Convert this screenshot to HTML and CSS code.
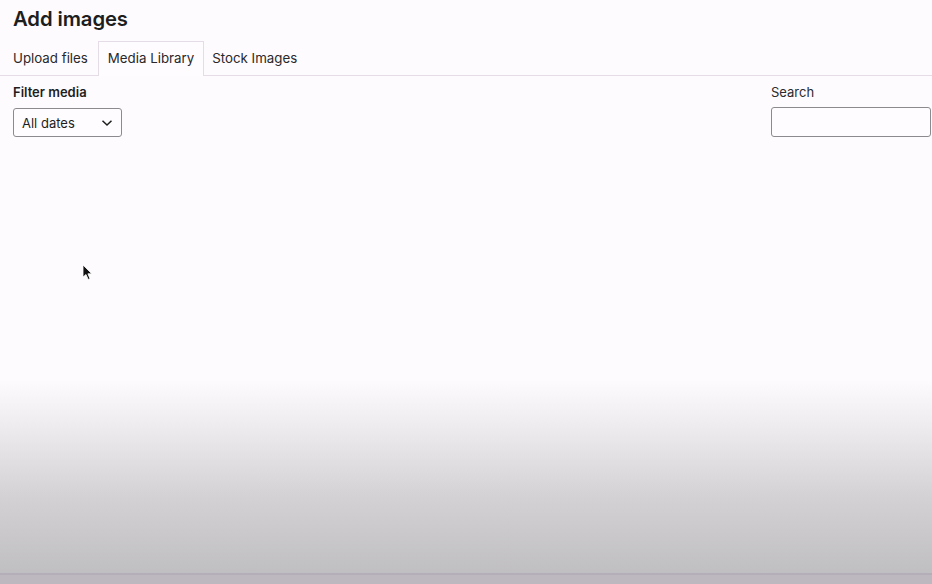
FILE: index.html
```html
<!DOCTYPE html>
<html>

<head>
    <meta charset="utf-8">
    <title>Add images</title>
    <link rel="stylesheet" href="styles.css">
</head>

<body>

    <div class="modal">

        <h1 class="title">Add images</h1>

        <div class="router">
            <span class="tab">Upload files</span>
            <span class="tab active">Media Library</span>
            <span class="tab">Stock Images</span>
        </div>

        <div class="toolbar">

            <div class="filter">
                <label class="filter-label">Filter media</label>
                <div class="select">
                    <span>All dates</span>
                    <svg width="12" height="8" viewBox="0 0 12 8">
                        <path d="M1.5 1.8 L6 6 L10.5 1.8" fill="none" stroke="#1e1e1e" stroke-width="1.5"/>
                    </svg>
                </div>
            </div>

            <div class="search">
                <label class="search-label">Search</label>
                <div class="search-input"></div>
            </div>

        </div>

        <div class="content"></div>

    </div>

    <!-- mouse pointer from the capture -->
    <svg class="cursor" width="12" height="18" viewBox="0 0 12 18">
        <path d="M1 1 L1 13 L4 10.5 L6.2 15.5 L8 14.7 L5.9 9.8 L9.8 9.8 Z" fill="#111" stroke="#fff" stroke-width="0.8"/>
    </svg>

    <div class="shade"></div>
    <div class="bottom-line"></div>

</body>

</html>
```

FILE: styles.css
```css
html,
body {
    margin: 0;
    padding: 0;
    height: 100%;
}

body {
    background-color: #fdfbfd;
    color: #1e1e1e;
    font-family: Inter, "Noto Sans", sans-serif;
    overflow: hidden;
    position: relative;
}

.modal {
    height: 100%;
    display: flex;
    flex-direction: column;
}

.title {
    margin: 0;
    padding: 6px 13px 0;
    height: 35px;
    font-size: 20.3px;
    font-weight: 600;
    line-height: 26px;
    letter-spacing: -0.1px;
}

.router {
    display: flex;
    padding-left: 3px;
    border-bottom: 1px solid #e4dce6;
    height: 34px;
}

.tab {
    padding: 0 9px;
    font-size: 13.3px;
    line-height: 33px;
    color: #2a282a;
    border: 1px solid transparent;
    border-bottom: none;
    margin-bottom: -1px;
}

.tab.active {
    background-color: #fefcfe;
    border-color: #e4dce6;
    height: 34px;
}

.tab.active + .tab {
    padding-left: 7px;
}

.toolbar {
    display: flex;
    justify-content: space-between;
    padding: 8px 1px 0 13px;
}

.filter-label,
.search-label {
    display: block;
    font-size: 13px;
    line-height: 16px;
    margin-bottom: 8px;
}

.filter-label {
    font-weight: 600;
}

.search-label {
    color: #2c2a2c;
    margin-bottom: 7px;
}

.select {
    width: 109px;
    height: 29px;
    box-sizing: border-box;
    border: 1px solid #8c8a8e;
    border-radius: 3px;
    display: flex;
    align-items: center;
    justify-content: space-between;
    padding: 0 8px 0 8px;
    font-size: 13px;
    background-color: #fefcfe;
}

.search-input {
    width: 160px;
    height: 30px;
    box-sizing: border-box;
    border: 1px solid #8c8a8e;
    border-radius: 3px;
    background-color: #fefcfe;
}

.content {
    flex: 1;
}

.cursor {
    position: absolute;
    left: 82px;
    top: 264px;
}

.shade {
    position: absolute;
    left: 0;
    right: 0;
    top: 380px;
    height: 193px;
    background: linear-gradient(to bottom, rgba(190, 186, 190, 0) 0%, rgba(190, 186, 190, 0.25) 25%, rgba(185, 182, 186, 0.6) 60%, rgba(188, 187, 189, 0.95) 100%);
    pointer-events: none;
}

.bottom-line {
    position: absolute;
    left: 0;
    right: 0;
    top: 573px;
    bottom: 0;
    background-color: #bdb8bf;
    border-top: 2px solid #b4aeb8;
}
```
